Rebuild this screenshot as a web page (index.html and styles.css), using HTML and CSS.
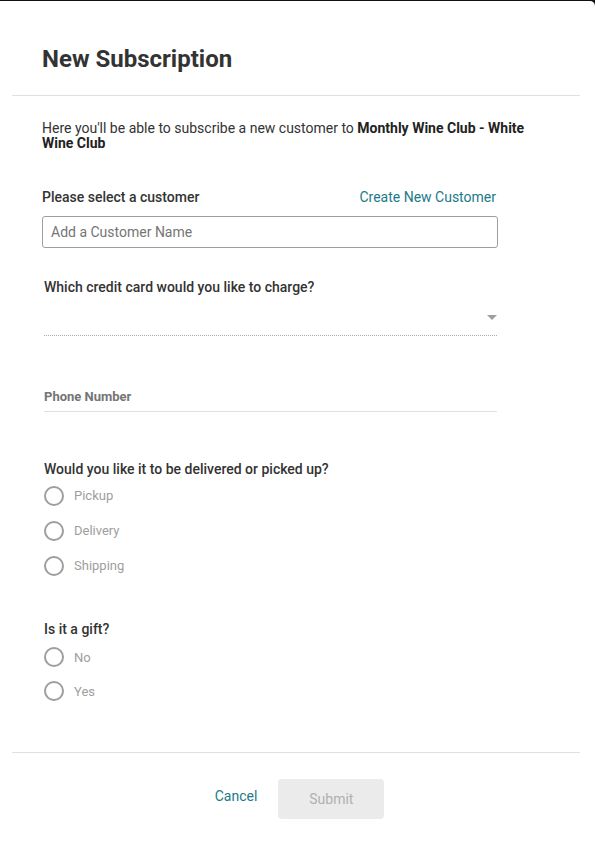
FILE: index.html
```html
<!DOCTYPE html>
<html>
<head>
<meta charset="utf-8">
<link rel="stylesheet" href="styles.css">
</head>
<body>
<div class="modal">
  <div class="header">
    <h1 class="title">New Subscription</h1>
  </div>
  <div class="content">
    <p class="intro">Here you'll be able to subscribe a new customer to <strong>Monthly Wine Club - White Wine Club</strong></p>

    <div class="customer">
      <div class="label-row">
        <span class="label">Please select a customer</span>
        <a class="link" href="#">Create New Customer</a>
      </div>
      <div class="text-input">Add a Customer Name</div>
    </div>

    <div class="section">
      <div class="label">Which credit card would you like to charge?</div>
      <div class="select"><span class="arrow"></span></div>

      <div class="phone"><span class="phone-label">Phone Number</span></div>

      <div class="label q-delivery">Would you like it to be delivered or picked up?</div>
      <div class="radios">
        <div class="radio"><span class="circle"></span><span class="radio-text">Pickup</span></div>
        <div class="radio"><span class="circle"></span><span class="radio-text">Delivery</span></div>
        <div class="radio"><span class="circle"></span><span class="radio-text">Shipping</span></div>
      </div>

      <div class="label q-gift">Is it a gift?</div>
      <div class="radios gift">
        <div class="radio"><span class="circle"></span><span class="radio-text">No</span></div>
        <div class="radio"><span class="circle"></span><span class="radio-text">Yes</span></div>
      </div>
    </div>
  </div>
  <div class="footer">
    <a class="cancel" href="#">Cancel</a>
    <span class="submit">Submit</span>
  </div>
</div>
</body>
</html>
```

FILE: styles.css
```css
html, body {
  margin: 0;
  padding: 0;
  background: #111;
}
body {
  font-family: Roboto, "Liberation Sans", Arial, sans-serif;
  color: #333;
}
.modal {
  margin-top: 1px;
  background: #fff;
  border-top-right-radius: 5px;
  height: 862px;
  overflow: hidden;
}
.header {
  margin: 0 15px 0 12px;
  padding: 44px 0 22px 30px;
  border-bottom: 1px solid #e0e0e0;
}
.title {
  margin: 0;
  font-size: 24px;
  line-height: 28px;
  font-weight: 700;
  color: #333;
}
.content {
  padding: 25px 0 0 42px;
}
.intro {
  margin: 0;
  width: 500px;
  font-size: 14px;
  line-height: 15px;
  color: #333;
}
.intro strong {
  font-weight: 700;
  color: #222;
}
.customer {
  width: 456px;
  margin-top: 39px;
}
.label-row {
  display: flex;
  justify-content: space-between;
  align-items: baseline;
  height: 15px;
  padding-right: 2px;
}
.label {
  font-size: 14px;
  line-height: 15px;
  font-weight: 500;
  color: #333;
}
.link {
  font-size: 14px;
  line-height: 15px;
  color: #1b7a8a;
  text-decoration: none;
}
.text-input {
  margin-top: 11px;
  box-sizing: border-box;
  height: 32px;
  border: 1px solid #9e9e9e;
  border-radius: 3px;
  padding: 0 8px;
  font-size: 14px;
  line-height: 30px;
  color: #757575;
}
.section {
  margin-top: 32px;
  padding-left: 2px;
  width: 453px;
}
.select {
  height: 35px;
  padding-top: 5px;
  border-bottom: 1px dotted #aaa;
  display: flex;
  justify-content: flex-end;
  align-items: center;
}
.arrow {
  width: 0;
  height: 0;
  border-left: 5px solid transparent;
  border-right: 5px solid transparent;
  border-top: 5px solid #9e9e9e;
}
.phone {
  margin-top: 50px;
  padding-bottom: 11px;
  border-bottom: 1px solid #e0e0e0;
  height: 14px;
}
.phone-label {
  font-size: 13px;
  line-height: 14px;
  font-weight: 700;
  color: #757575;
}
.q-delivery {
  margin-top: 50px;
}
.radios {
  margin-top: 1px;
}
.radio {
  height: 35px;
  display: flex;
  align-items: center;
}
.gift {
  margin-top: 3px;
}
.gift .radio {
  height: 34px;
}
.circle {
  box-sizing: border-box;
  width: 20px;
  height: 20px;
  border: 2px solid #9e9e9e;
  border-radius: 50%;
  flex: none;
}
.radio-text {
  margin-left: 10px;
  font-size: 13px;
  color: #9e9e9e;
}
.q-gift {
  margin-top: 39px;
}
.footer {
  margin: 44px 15px 0 12px;
  border-top: 1px solid #e0e0e0;
  padding-top: 26px;
  display: flex;
  justify-content: center;
  align-items: center;
  gap: 21px;
  padding-left: 7px;
}
.cancel {
  font-size: 14px;
  color: #1b7a8a;
  text-decoration: none;
  margin-top: -7px;
}
.submit {
  width: 106px;
  height: 40px;
  border-radius: 4px;
  background: #ebebeb;
  color: #b0b0b0;
  font-size: 14px;
  line-height: 40px;
  text-align: center;
}
```
